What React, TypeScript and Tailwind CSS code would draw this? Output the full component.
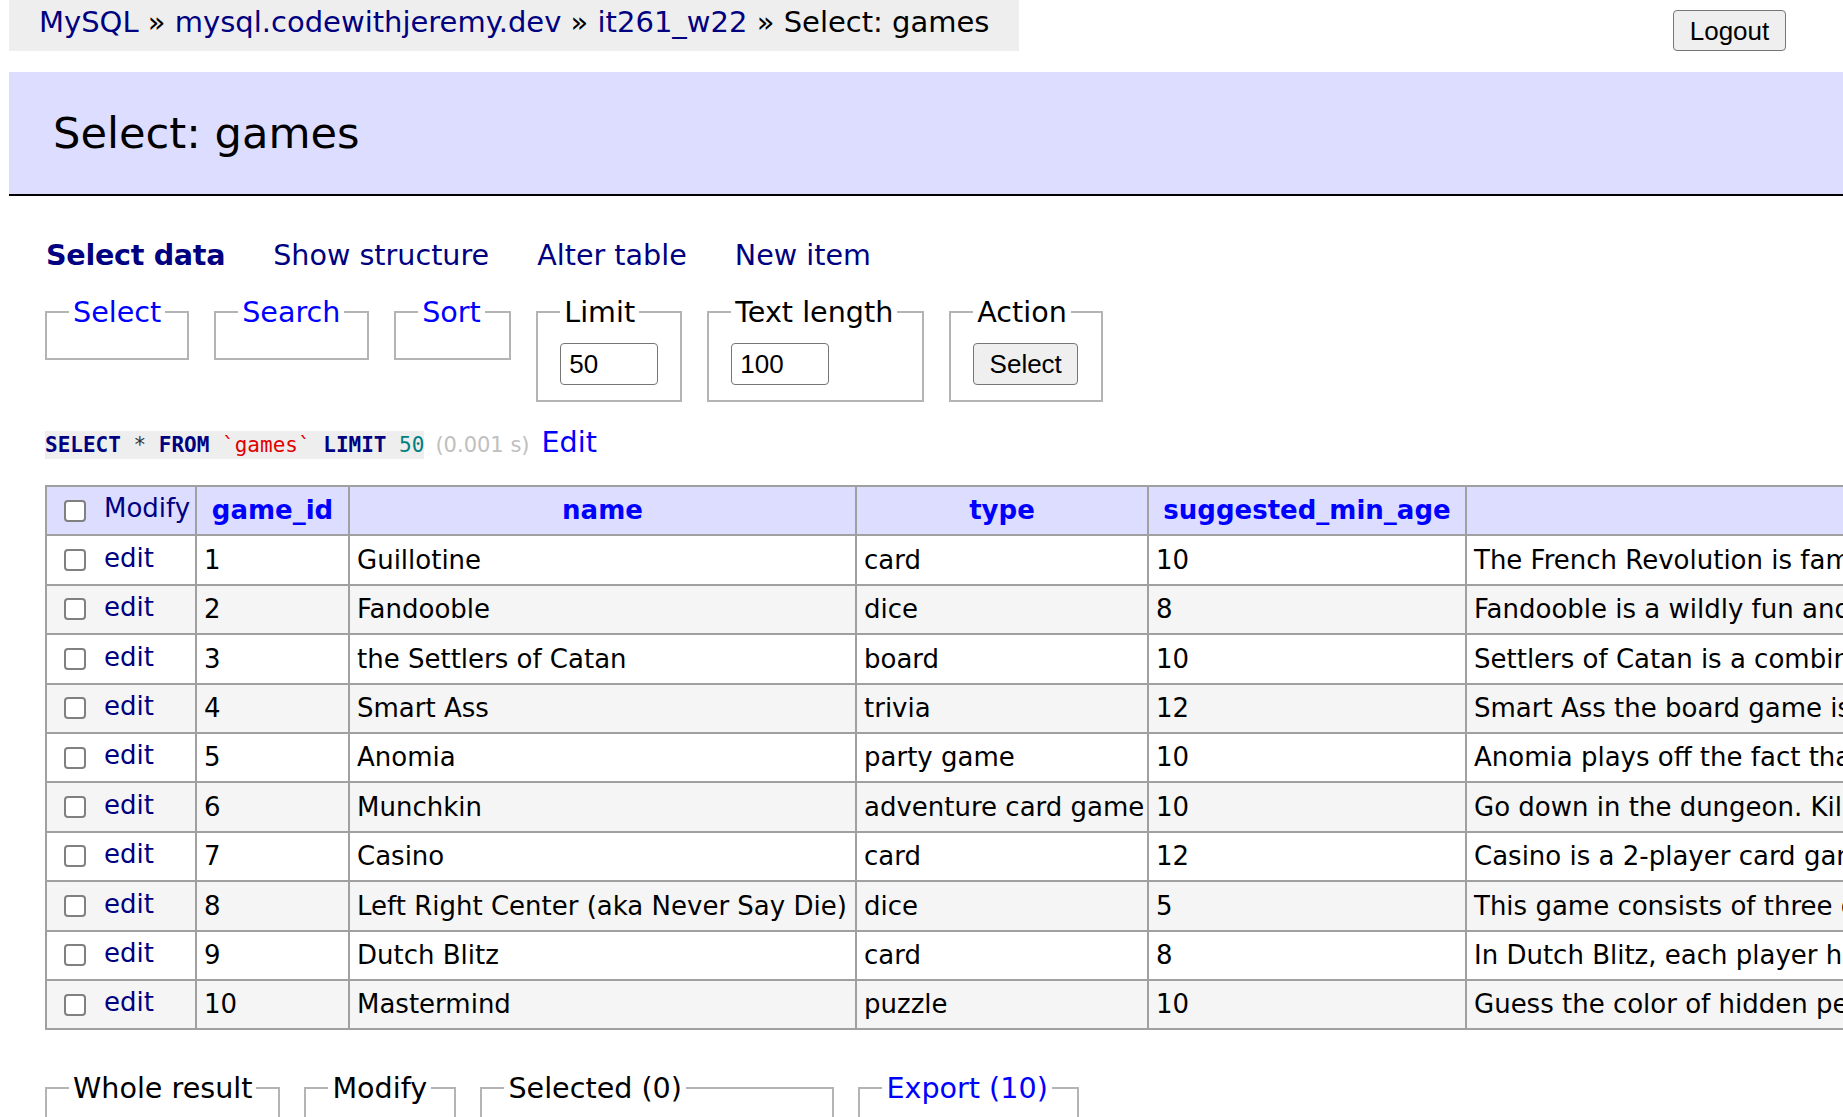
import React from "react";

type Game = {
  id: number;
  name: string;
  type: string;
  minAge: number;
  description: string;
};

const games: Game[] = [
  { id: 1, name: "Guillotine", type: "card", minAge: 10, description: "The French Revolution is famous for its guillotine, and in this game players compete to collect the bes…" },
  { id: 2, name: "Fandooble", type: "dice", minAge: 8, description: "Fandooble is a wildly fun and fast dice game where players race to roll matching symbols before anyo…" },
  { id: 3, name: "the Settlers of Catan", type: "board", minAge: 10, description: "Settlers of Catan is a combination of strategy, trading and luck as players build roads, settlements…" },
  { id: 4, name: "Smart Ass", type: "trivia", minAge: 12, description: "Smart Ass the board game is a trivia game where everyone answers at once and the first to shout wins…" },
  { id: 5, name: "Anomia", type: "party game", minAge: 10, description: "Anomia plays off the fact that under pressure, even the simplest answers can escape your memory, an…" },
  { id: 6, name: "Munchkin", type: "adventure card game", minAge: 10, description: "Go down in the dungeon. Kill everything you meet. Backstab your friends and steal their stuff. Grab…" },
  { id: 7, name: "Casino", type: "card", minAge: 12, description: "Casino is a 2-player card game where players capture cards from the table by matching or building c…" },
  { id: 8, name: "Left Right Center (aka Never Say Die)", type: "dice", minAge: 5, description: "This game consists of three dice and a handful of chips, and players pass chips left, right or to th…" },
  { id: 9, name: "Dutch Blitz", type: "card", minAge: 8, description: "In Dutch Blitz, each player has their own deck and everyone plays at the same time to empty their pi…" },
  { id: 10, name: "Mastermind", type: "puzzle", minAge: 10, description: "Guess the color of hidden pegs in as few turns as possible using the clues given by the codemaker af…" },
];

function Check() {
  return (
    <span className="inline-block w-[22px] h-[22px] shrink-0 rounded-[4px] border-2 border-[#808080] bg-white" />
  );
}

function Box({
  label,
  link,
  className,
  children,
}: {
  label: string;
  link?: boolean;
  className: string;
  children?: React.ReactNode;
}) {
  return (
    <fieldset className={className}>
      <legend className="px-[4px] leading-[36px] whitespace-nowrap">
        {link ? <a className="text-[#0000ff]">{label}</a> : label}
      </legend>
      {children}
    </fieldset>
  );
}

// table cell borders / sizing
const border = "border-2 border-[#a0a0a0] h-[49.4px] whitespace-nowrap";
const cell = `${border} px-[7px]`;
const checkCell = `${border} p-0`;

export default function App() {
  return (
    <div className="h-screen w-full overflow-hidden bg-white text-black font-['DejaVu_Sans',Verdana,sans-serif] text-[28.6px] leading-[1.25]">
      {/* Breadcrumb & logout */}
      <div className="flex items-start justify-between h-[72px] pl-[9px] pr-[57px]">
        <p className="h-[51px] bg-[#eee] px-[30px] leading-[44px] text-[29px] whitespace-nowrap">
          <a className="text-[#000080]">MySQL</a> » <a className="text-[#000080]">mysql.codewithjeremy.dev</a> »{" "}
          <a className="text-[#000080]">it261_w22</a> » Select: games
        </p>
        <button className="mt-[10px] w-[113px] h-[41px] rounded-[4px] border border-[#767676] bg-[#efefef] font-['Liberation_Sans',Arial,sans-serif] text-[26px] leading-none">
          Logout
        </button>
      </div>

      <h2 className="ml-[9px] bg-[#ddf] border-b-2 border-black pt-[34px] pb-[34px] pl-[44px] text-[43.2px] leading-[1.25] whitespace-nowrap">
        Select: games
      </h2>

      <div className="pl-[45px]">
        {/* Links */}
        <p className="mt-[41px] pl-[1px] flex gap-[48px] leading-[36px] text-[#000080] whitespace-nowrap">
          <a className="font-bold tracking-[-0.3px]">Select data</a>
          <a>Show structure</a>
          <a>Alter table</a>
          <a>New item</a>
        </p>

        {/* Select form */}
        <div className="mt-[21px] flex items-start gap-[25px]">
          <Box label="Select" link className="w-[144px] border-2 border-[#b4b4b4] px-[22px] pt-[13px] pb-[15px]" />
          <Box label="Search" link className="w-[155px] border-2 border-[#b4b4b4] px-[22px] pt-[13px] pb-[15px]" />
          <Box label="Sort" link className="w-[117px] border-2 border-[#b4b4b4] px-[22px] pt-[13px] pb-[15px]" />
          <Box label="Limit" className="w-[146px] border-2 border-[#b4b4b4] px-[22px] pt-[13px] pb-[15px]">
            <input
              readOnly
              value="50"
              className="block w-[98px] h-[42px] rounded-[4px] border border-[#767676] bg-white px-[8px] font-['Liberation_Sans',Arial,sans-serif] text-[26px] outline-none"
            />
          </Box>
          <Box label="Text length" className="w-[217px] border-2 border-[#b4b4b4] px-[22px] pt-[13px] pb-[15px]">
            <input
              readOnly
              value="100"
              className="block w-[98px] h-[42px] rounded-[4px] border border-[#767676] bg-white px-[8px] font-['Liberation_Sans',Arial,sans-serif] text-[26px] outline-none"
            />
          </Box>
          <Box label="Action" className="w-[154px] border-2 border-[#b4b4b4] px-[22px] pt-[13px] pb-[15px]">
            <button className="block w-[105px] h-[42px] rounded-[4px] border border-[#767676] bg-[#efefef] font-['Liberation_Sans',Arial,sans-serif] text-[26px] leading-none">
              Select
            </button>
          </Box>
        </div>

        {/* Query */}
        <p className="mt-[22px] leading-[36px] whitespace-nowrap">
          <code className="bg-[#eee] py-[2px] font-['DejaVu_Sans_Mono',monospace] text-[21px]">
            <span className="font-bold text-[#000080]">SELECT</span> <span className="text-[#333]">*</span>{" "}
            <span className="font-bold text-[#000080]">FROM</span> <span className="text-[#e00000]">`games`</span>{" "}
            <span className="font-bold text-[#000080]">LIMIT</span> <span className="text-[#008080]">50</span>
          </code>
          <span className="ml-[11px] text-[21px] text-[#c0c0c0]">(0.001 s)</span>
          <a className="ml-[12px] text-[#0000ff]">Edit</a>
        </p>

        {/* Results */}
        <table className="mt-[22px] border-collapse table-fixed w-[2820px] text-[26px] leading-[1.25]">
          <colgroup>
            <col className="w-[150px]" />
            <col className="w-[153px]" />
            <col className="w-[507px]" />
            <col className="w-[292px]" />
            <col className="w-[318px]" />
            <col className="w-[1400px]" />
          </colgroup>
          <thead>
            <tr className="bg-[#ddf]">
              <td className={checkCell}>
                <label className="flex items-center gap-[18px] pl-[17px] text-[#000080]">
                  <Check />
                  <span className="-mt-[4px]">Modify</span>
                </label>
              </td>
              {["game_id", "name", "type", "suggested_min_age", "description"].map((h) => (
                <th key={h} className={`${cell} text-center font-bold`}>
                  <a className="text-[#0000ff]">{h}</a>
                </th>
              ))}
            </tr>
          </thead>
          <tbody>
            {games.map((g, i) => (
              <tr key={g.id} className={i % 2 === 1 ? "bg-[#f5f5f5]" : "bg-white"}>
                <td className={checkCell}>
                  <div className="flex items-center gap-[18px] pl-[17px]">
                    <Check />
                    <a className="-mt-[4px] text-[#000080]">edit</a>
                  </div>
                </td>
                <td className={cell}>{g.id}</td>
                <td className={cell}>{g.name}</td>
                <td className={cell}>{g.type}</td>
                <td className={cell}>{g.minAge}</td>
                <td className={cell}>{g.description}</td>
              </tr>
            ))}
          </tbody>
        </table>

        {/* Bulk actions */}
        <div className="mt-[40px] flex items-start gap-[24px]">
          <Box label="Whole result" className="w-[235px] h-[120px] border-2 border-[#b4b4b4] px-[22px] pt-[13px] pb-[15px]" />
          <Box label="Modify" className="w-[152px] h-[120px] border-2 border-[#b4b4b4] px-[22px] pt-[13px] pb-[15px]" />
          <Box label="Selected (0)" className="w-[354px] h-[120px] border-2 border-[#b4b4b4] px-[22px] pt-[13px] pb-[15px]" />
          <Box label="Export (10)" link className="w-[221px] h-[120px] border-2 border-[#b4b4b4] px-[22px] pt-[13px] pb-[15px]" />
        </div>
      </div>
    </div>
  );
}
